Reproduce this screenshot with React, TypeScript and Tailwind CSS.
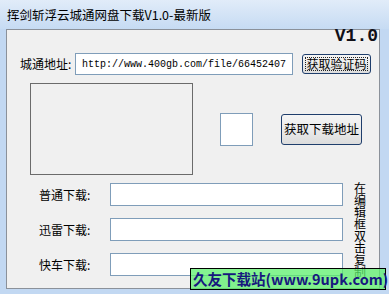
import React from 'react';

const cjk = "font-['Noto_Sans_CJK_SC',sans-serif]";

const DownloadRow: React.FC<{ label: string; value?: string }> = ({ label, value = '' }) => (
  <div className="flex items-center h-[23px]">
    <span className="w-[71px] text-[12px] leading-[14px] text-black">{label}</span>
    <input
      readOnly
      value={value}
      className="w-[233px] h-[23px] border border-[#7f9db9] bg-white px-[4px] text-[12px] outline-none"
    />
  </div>
);

const App: React.FC = () => {
  return (
    <div className={`relative w-[389px] h-[294px] overflow-hidden bg-[#c2d8f2] ${cjk}`}>
      {/* title bar */}
      <div className="h-[29px] flex items-center pl-[7px] bg-gradient-to-b from-[#e1ecf9] to-[#c6dbf3]">
        <span className="text-[12.5px] text-black leading-[16px]">挥剑斩浮云城通网盘下载V1.0-最新版</span>
      </div>

      {/* client area */}
      <div className="ml-[6px] w-[374px] h-[260px] border border-[#8b919a] bg-[#f0f0f0] flex flex-col">
        <div className="h-[23px] flex justify-end pr-[1px]">
          <span className="font-['Liberation_Mono',monospace] font-bold text-[18px] leading-[18px] -mt-[3px] text-[#101018]">V1.0</span>
        </div>

        {/* address row */}
        <div className="flex items-center h-[22px] pl-[13px]">
          <span className="w-[55px] text-[12px] leading-[14px] text-black">城通地址:</span>
          <input
            readOnly
            value="http://www.400gb.com/file/66452407"
            className="w-[218px] h-[22px] border border-[#7f9db9] bg-white pl-[6px] font-['Liberation_Mono',monospace] text-[10px] text-black outline-none"
          />
          <button className="ml-[9px] w-[69px] h-[20px] rounded-[3px] border border-[#1f3e6c] bg-gradient-to-b from-[#f5f5f5] via-[#ebebeb] to-[#dcdcdc] p-[2px] flex">
            <span className="flex-1 flex items-center justify-center border border-dotted border-[#222] text-[12px] leading-[12px] text-black">获取验证码</span>
          </button>
        </div>

        {/* captcha area */}
        <div className="flex items-start pl-[23px] mt-[8px]">
          <div className="w-[163px] h-[92px] border border-[#6b6b6b] bg-[#f0f0f0]" />
          <div className="ml-[27px] mt-[30px] w-[33px] h-[33px] border border-[#7f9db9] bg-white" />
          <button className="ml-[28px] mt-[31px] w-[81px] h-[31px] rounded-[3px] border border-[#1f3e6c] bg-gradient-to-b from-[#f5f5f5] via-[#ebebeb] to-[#dcdcdc] flex items-center justify-center text-[12.5px] text-black">
            获取下载地址
          </button>
        </div>

        {/* download links */}
        <div className="flex items-start mt-[8px]">
          <div className="flex flex-col gap-[12px] pl-[32px]">
            <DownloadRow label="普通下载:" />
            <DownloadRow label="迅雷下载:" />
            <DownloadRow label="快车下载:" />
          </div>
          <div className="ml-[11px] -mt-[1px] w-[13px] break-all text-[12px] leading-[12px] text-black">在编辑框双击复制</div>
        </div>
      </div>

      {/* watermark */}
      <div className="absolute left-[190px] top-[268px] w-[196px] h-[22px] border border-black bg-[#5cf06c]/75 flex items-center pl-[2px]">
        <span className="font-bold text-[14.5px] leading-[18px] text-[#17177e] whitespace-nowrap">久友下载站(www.9upk.com)</span>
      </div>
    </div>
  );
};

export default App;
